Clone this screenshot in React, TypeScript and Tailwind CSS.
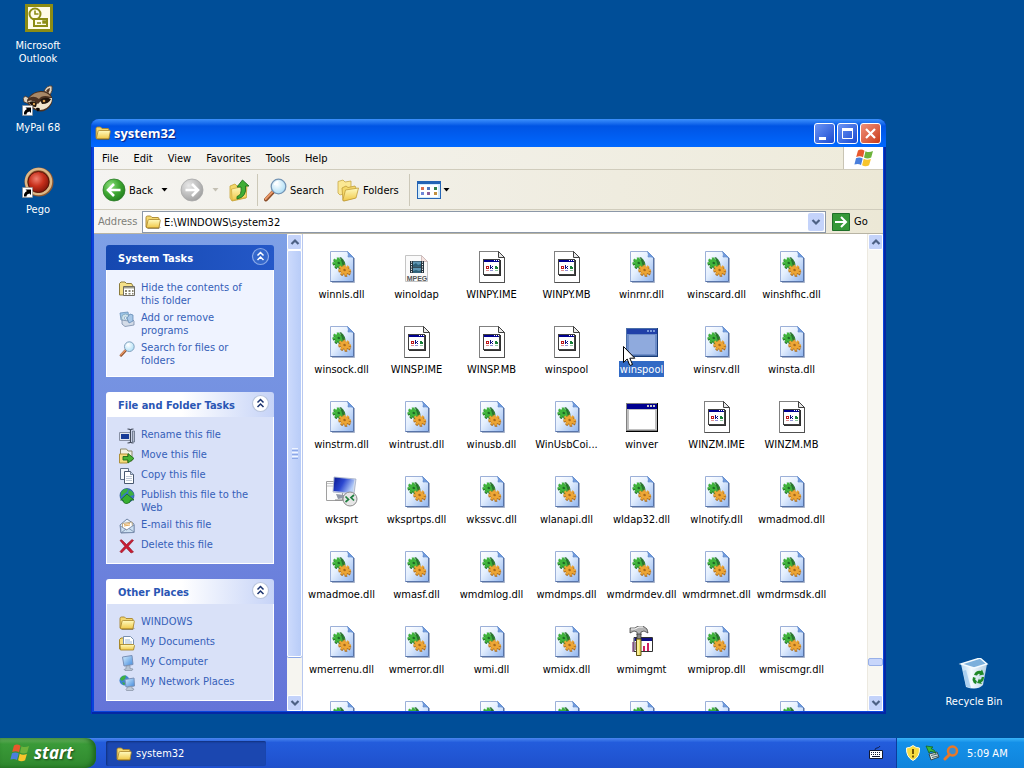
import React from "react";

type IconProps = { className?: string };
type FileKind = "dll" | "ime" | "mpeg" | "exe" | "remote" | "mgmt";
type FileEntry = { name: string; kind: FileKind; selected?: boolean };

const file = (name: string, kind: FileKind = "dll", selected = false): FileEntry => ({ name, kind, selected });

const files: FileEntry[] = [
  file("winnls.dll"), file("winoldap", "mpeg"), file("WINPY.IME", "ime"), file("WINPY.MB", "ime"), file("winrnr.dll"), file("winscard.dll"), file("winshfhc.dll"),
  file("winsock.dll"), file("WINSP.IME", "ime"), file("WINSP.MB", "ime"), file("winspool", "ime"), file("winspool", "exe", true), file("winsrv.dll"), file("winsta.dll"),
  file("winstrm.dll"), file("wintrust.dll"), file("winusb.dll"), file("WinUsbCoi..."), file("winver", "exe"), file("WINZM.IME", "ime"), file("WINZM.MB", "ime"),
  file("wksprt", "remote"), file("wksprtps.dll"), file("wkssvc.dll"), file("wlanapi.dll"), file("wldap32.dll"), file("wlnotify.dll"), file("wmadmod.dll"),
  file("wmadmoe.dll"), file("wmasf.dll"), file("wmdmlog.dll"), file("wmdmps.dll"), file("wmdrmdev.dll"), file("wmdrmnet.dll"), file("wmdrmsdk.dll"),
  file("wmerrenu.dll"), file("wmerror.dll"), file("wmi.dll"), file("wmidx.dll"), file("wmimgmt", "mgmt"), file("wmiprop.dll"), file("wmiscmgr.dll"),
];

/* Row that is only partly scrolled into view: icons without captions */
const partialRow = ["Library 1", "Library 2", "Library 3", "Library 4", "Library 5", "Library 6", "Library 7"];

/* Gradients shared by all the icons */
function SharedGradients() {
  return (
    <svg className="absolute h-0 w-0" aria-hidden="true">
      <defs>
        <linearGradient id="dllPage" x1="0" y1="0" x2="1" y2="1">
          <stop offset="0" stopColor="#ffffff" /><stop offset="0.45" stopColor="#e4effe" /><stop offset="1" stopColor="#8fb4ee" />
        </linearGradient>
        <linearGradient id="folderFace" x1="0" y1="0" x2="0" y2="1">
          <stop offset="0" stopColor="#fffbc0" /><stop offset="1" stopColor="#f0c848" />
        </linearGradient>
        <radialGradient id="greenBall" cx="0.35" cy="0.3" r="0.8">
          <stop offset="0" stopColor="#8fe07e" /><stop offset="0.5" stopColor="#3fa832" /><stop offset="1" stopColor="#1f7a1c" />
        </radialGradient>
        <radialGradient id="greyBall" cx="0.35" cy="0.3" r="0.8">
          <stop offset="0" stopColor="#e8e8e8" /><stop offset="0.6" stopColor="#b9b9b9" /><stop offset="1" stopColor="#9a9a9a" />
        </radialGradient>
        <radialGradient id="lens" cx="0.4" cy="0.35" r="0.7">
          <stop offset="0" stopColor="#ffffff" /><stop offset="1" stopColor="#a8dcf5" />
        </radialGradient>
        <radialGradient id="pegoRed" cx="0.4" cy="0.35" r="0.7">
          <stop offset="0" stopColor="#f08070" /><stop offset="0.5" stopColor="#c8301c" /><stop offset="1" stopColor="#7c1408" />
        </radialGradient>
        <linearGradient id="screenBlue" x1="0" y1="0" x2="1" y2="0.4">
          <stop offset="0" stopColor="#0a1890" /><stop offset="0.5" stopColor="#2c48d0" /><stop offset="1" stopColor="#b8d0f8" />
        </linearGradient>
        <linearGradient id="monitor" x1="0" y1="0" x2="1" y2="1">
          <stop offset="0" stopColor="#d8f0ff" /><stop offset="1" stopColor="#3f88dc" />
        </linearGradient>
        <linearGradient id="binBody" x1="0" y1="0" x2="1" y2="0">
          <stop offset="0" stopColor="#b8daf4" /><stop offset="0.4" stopColor="#f4fbff" /><stop offset="1" stopColor="#b4cfe4" />
        </linearGradient>
      </defs>
    </svg>
  );
}

function Gear({ cx, cy, color, edge }: { cx: number; cy: number; color: string; edge: string }) {
  return (
    <g transform={`translate(${cx} ${cy}) rotate(22) scale(1 0.84)`}>
      <g transform="translate(0.6 1.1)">
        <circle r="5.300" fill="none" stroke={edge} strokeWidth="2.400" strokeDasharray="2.400 1.760" />
        <circle r="4.500" fill={edge} />
      </g>
      <circle r="5.300" fill="none" stroke={color} strokeWidth="2.200" strokeDasharray="2.400 1.760" />
      <circle r="4.500" fill={color} />
      <circle r="1.400" fill={edge} />
    </g>
  );
}

function DllIcon() {
  return (
    <svg viewBox="0 0 32 32" className="h-8 w-8" aria-hidden="true">
      <path d="M6 31.5h22.5V7" fill="none" stroke="#8494b4" strokeWidth="1" opacity="0.7" />
      <path d="M4.5.5h17l6 6v24h-23z" fill="url(#dllPage)" stroke="#9cb0d8" />
      <path d="M27.5 6.5v24h-23" fill="none" stroke="#5874a8" />
      <path d="M21.5.5q1.500 3 .5 5.500 3-.5 5.500.5z" fill="#6f9ade" stroke="#5c88cc" strokeWidth="0.7" />
      <Gear cx={12.8} cy={12} color="#3fb43c" edge="#1f6a26" />
      <Gear cx={18.6} cy={19} color="#eda636" edge="#a8681c" />
      <path d="M13.500 6.500l1.500-.5 4 5-1 3.500-1.500 0-1-4z" fill="#24682c" opacity="0.800" />
    </svg>
  );
}

function ImeIcon() {
  return (
    <svg viewBox="0 0 32 32" className="h-8 w-8" aria-hidden="true" shapeRendering="crispEdges">
      <path d="M3.500.5h19l6 6v25h-25z" fill="#fff" stroke="#808080" />
      <path d="M28.500 7v24.500h-25" fill="none" stroke="#505050" />
      <path d="M22.500.5v6h6z" fill="#e8e8e8" stroke="#404040" shapeRendering="auto" />
      <path d="M7.500 8.500h16v15h-16z" fill="#fff" stroke="#404040" />
      <path d="M24.500 9v15.500H8" fill="none" stroke="#303030" />
      <path d="M8 9h15v2H8z" fill="#000090" />
      <path d="M18 9h1v1h-1zm2 0h1v1h-1zm2 0h1v1h-1z" fill="#fff" />
      <path d="M10 15h3v3h-3z" fill="#c01818" />
      <path d="M11 16h1v1h-1z" fill="#fff" />
      <path d="M14 14h1v4h-1zm2 1h1v1h-1zm-1 1h1v1h-1zm1 1h1v1h-1z" fill="#101080" />
      <path d="M19 15h2v1h1v2h-3z" fill="#188038" />
      <path d="M10 19h3v1h-3z" fill="#e09090" /><path d="M14 19h3v1h-3z" fill="#9090d8" /><path d="M19 19h3v1h-3z" fill="#90c8a0" />
    </svg>
  );
}

function MpegIcon() {
  return (
    <svg viewBox="0 0 32 32" className="h-8 w-8" aria-hidden="true">
      <path d="M4.500 4.500h16l6 6v20h-22z" fill="#fafafa" stroke="#c4c4c4" />
      <path d="M20.500 4.500v6h6z" fill="#f6e4e0" stroke="#c8b4b4" strokeWidth="0.800" />
      <path d="M9 10h14v12H9z" fill="#26343e" />
      <path d="M12 10.500h8v5h-8zm0 6.300h8v5h-8z" fill="#5f96b4" />
      <path d="M12 14l3-2 2 2 3-1v2.500h-8zm0 6l3-1 3 1 2-1v2.800h-8z" fill="#2c6078" />
      <path d="M10.500 10.500v12M21.500 10.500v12" stroke="#fff" strokeWidth="1" strokeDasharray="1.200 1.200" />
      <text x="16" y="30" textAnchor="middle" fontFamily="Liberation Sans, sans-serif" fontWeight="700" fontSize="7" fill="#555">MPEG</text>
    </svg>
  );
}

function ExeIcon({ selected }: { selected?: boolean }) {
  return (
    <svg viewBox="0 0 32 32" className="h-8 w-8" aria-hidden="true" shapeRendering="crispEdges">
      <path d="M0 2h32v29H0z" fill={selected ? "#4a6ea8" : "#808080"} />
      <path d="M31 2h1v29H0v-1h31z" fill={selected ? "#183c78" : "#000"} />
      <path d="M1 3h30v26H1z" fill={selected ? "#6c8cc8" : "#c0c0c0"} />
      <path d="M1 3h30v5H1z" fill={selected ? "#2040a8" : "#000090"} />
      <path d="M3 9h26v19H3z" fill={selected ? "#8faadd" : "#fff"} />
      <path d="M21 4h2v2h-2zm3 0h2v2h-2zm3 0h2v2h-2z" fill={selected ? "#7898d8" : "#c8c8c8"} />
    </svg>
  );
}

function RemoteIcon() {
  return (
    <svg viewBox="0 0 32 32" className="h-8 w-8" aria-hidden="true">
      <path d="M.5 5.500h16v19H.5z" fill="#fdfdfd" stroke="#a0a0a0" />
      <path d="M1 7.500h14M1 10h14" stroke="#c4c4c4" />
      <path d="M8 1l22 2-2 15-21-2z" fill="#d4dcec" stroke="#98a4bc" strokeWidth="0.700" />
      <path d="M8.500 1.500l20 2-2 13.500-19-2z" fill="url(#screenBlue)" />
      <path d="M10 18l8 1v3l-6 1z" fill="#9098a8" />
      <path d="M9 24h10" stroke="#888" />
      <circle cx="24" cy="23" r="7" fill="#e6e6e6" stroke="#8c8c8c" />
      <path d="M19.500 20.500l3 3-3 2.500M28 19l-3 2.500 3 3" fill="none" stroke="#208040" strokeWidth="1.700" />
    </svg>
  );
}

function MgmtIcon() {
  return (
    <svg viewBox="0 0 32 32" className="h-8 w-8" aria-hidden="true">
      <path d="M8 11.500h18.500v14H8z" fill="#fff" stroke="#303030" />
      <path d="M8.500 12h17.500v3H8.500z" fill="#101080" />
      <path d="M7 16v10M10 16v8" stroke="#601060" />
      <path d="M17 20h2v5h-2zM21 17h2v8h-2z" fill="#d02060" />
      <path d="M13.500 19v6" stroke="#2040b0" strokeWidth="1.500" />
      <path d="M4 2h5l3-2h5l4 3 1 4-4-2-3 1v3h-4V6L8 5 4 7z" fill="#b4b4b4" stroke="#303030" strokeWidth="0.700" />
      <path d="M5 3h4l4-2h4" fill="none" stroke="#fff" />
      <path d="M11 8h4v5h-4z" fill="#888" stroke="#303030" strokeWidth="0.700" />
      <path d="M10.500 13h4.500v16.500h-4.500z" fill="#f0e060" stroke="#605010" />
      <path d="M12 14v15" stroke="#fffbd0" />
    </svg>
  );
}

function FileIcon({ kind, selected }: { kind: FileKind; selected?: boolean }) {
  switch (kind) {
    case "ime": return <ImeIcon />;
    case "mpeg": return <MpegIcon />;
    case "exe": return <ExeIcon selected={selected} />;
    case "remote": return <RemoteIcon />;
    case "mgmt": return <MgmtIcon />;
    default: return <DllIcon />;
  }
}

function FolderIcon({ className = "h-4 w-4" }: IconProps) {
  return (
    <svg viewBox="0 0 16 16" className={className} aria-hidden="true">
      <path d="M1 13V3.500Q1 2 2.500 2h3L7 3.500h6Q14 3.500 14 5v8.500H2z" fill="#f4d870" stroke="#a8842c" strokeWidth="0.900" />
      <path d="M1.300 13.500L3 6.500Q3.200 5.500 4.200 5.500h10.300q1 0 .8 1L14 13q-.2.800-1 .8H2z" fill="url(#folderFace)" stroke="#a8842c" strokeWidth="0.800" />
      <path d="M2.500 14.500h11.500l1.300-1.500" fill="none" stroke="#6c5820" strokeWidth="0.600" />
    </svg>
  );
}

function FlagIcon({ className }: IconProps) {
  return (
    <svg viewBox="0 0 20 20" className={className} aria-hidden="true">
      <path d="M4 2.500q3-2 6.500.2L9 9.200Q5.800 7.300 2.200 9z" fill="#e8582c" />
      <path d="M11.500 3.200q3.500 1.800 7.500-.2l-1.800 6.500q-3.800 1.800-7.200 0z" fill="#6db33c" />
      <path d="M2 10.200q3.300-1.700 6.700.2L7 17Q4 15 .4 16.600z" fill="#4a7fdc" />
      <path d="M9.700 10.800q3.400 1.700 7.200.1l-1.800 6.300q-3.700 1.900-7 .1z" fill="#f8c52c" />
    </svg>
  );
}

function Magnifier({ className }: IconProps) {
  return (
    <svg viewBox="0 0 24 24" className={className} aria-hidden="true">
      <path d="M10 14L3 21.500" stroke="#8a4c28" strokeWidth="4" strokeLinecap="round" />
      <path d="M9.500 13.800L2.600 21" stroke="#e89868" strokeWidth="2" strokeLinecap="round" />
      <circle cx="15.500" cy="8.500" r="7.300" fill="url(#lens)" stroke="#7494b4" strokeWidth="1.300" />
      <path d="M11.500 7a4.500 4.500 0 0 1 4-3.200" fill="none" stroke="#fff" strokeWidth="1.500" />
    </svg>
  );
}

function ArrowBall({ left }: { left?: boolean }) {
  return (
    <svg viewBox="0 0 24 24" className="h-6 w-6" aria-hidden="true">
      <circle cx="12" cy="12" r="11" fill={left ? "url(#greenBall)" : "url(#greyBall)"} stroke={left ? "#2c7c28" : "#a8a8a8"} strokeWidth="0.800" />
      <path d={left ? "M18.500 12H7M12 6l-6 6 6 6" : "M5.500 12H17M12 6l6 6-6 6"} fill="none" stroke="#fff" strokeWidth="2.600" />
    </svg>
  );
}

function UpFolderIcon() {
  return (
    <svg viewBox="0 0 24 24" className="h-6 w-6" aria-hidden="true">
      <path d="M2 8l5-2 2 2 8-2 2 2-1 12L4 23 2 20z" fill="#f4d868" stroke="#c8a438" strokeWidth="0.800" />
      <path d="M3.500 11l14-3 1 11.500L4 22.500z" fill="url(#folderFace)" stroke="#c8a438" strokeWidth="0.700" />
      <path d="M9 18.500q5-1 4-9.500H9L14.500 2l6.500 6h-3.500q1.500 11-8.500 13z" fill="#3fae34" stroke="#1f7020" strokeWidth="0.900" />
    </svg>
  );
}

function FoldersIcon() {
  return (
    <svg viewBox="0 0 24 24" className="h-6 w-6" aria-hidden="true">
      <path d="M2 3.500l5-1.500 2 2 6-1v10L4 17 2 15z" fill="#fbe894" stroke="#c8a848" strokeWidth="0.800" />
      <path d="M6 10l4-2 2 1.500 7-1.500 1 2-1 10-12 3z" fill="#f4d868" stroke="#c09c38" strokeWidth="0.800" />
      <path d="M7 21.500L9.500 12l13-2-2.500 10-12 3z" fill="url(#folderFace)" stroke="#c09c38" strokeWidth="0.800" />
    </svg>
  );
}

function ViewsIcon() {
  return (
    <svg viewBox="0 0 24 20" className="h-5 w-6" aria-hidden="true" shapeRendering="crispEdges">
      <path d="M0 1h24v18H0z" fill="#2464b4" /><path d="M1 4h22v14H1z" fill="#d4ecfc" /><path d="M3 5h18v12H3z" fill="#fff" />
      <path d="M4 7h3v3H4z" fill="#d87050" /><path d="M10 7h3v3h-3z" fill="#5078c0" /><path d="M17 7h3v3h-3z" fill="#308048" />
      <path d="M4 12h3v3H4z" fill="#7088d8" /><path d="M10 12h3v3h-3z" fill="#906098" /><path d="M17 12h3v3h-3z" fill="#c09040" />
    </svg>
  );
}

function Chevron({ up }: { up?: boolean }) {
  return (
    <svg viewBox="0 0 10 8" className="h-2 w-2.5" aria-hidden="true">
      <path d={up ? "M1.500 6L5 2.500 8.500 6" : "M1.500 2L5 5.500 8.500 2"} fill="none" stroke="#4d6185" strokeWidth="2.200" />
    </svg>
  );
}

function Caret({ muted }: { muted?: boolean }) {
  return (
    <svg viewBox="0 0 7 4" className="h-1 w-[7px]" aria-hidden="true">
      <path d="M0.500 0h6l-3 3.500z" fill={muted ? "#c4c0b4" : "#000"} />
    </svg>
  );
}

/* 16px icons for the task pane */
const paneIcons: Record<string, React.ReactNode> = {
  hide: (
    <>
      <path d="M.5 14V2.500L2 1h4l1.500 1.500h5L14 5v9z" fill="#f4e088" stroke="#8c7c3c" />
      <path d="M4.500 5.500h11v9h-11z" fill="#fff" stroke="#706c60" />
      <path d="M5 6h10v1.500H5z" fill="#a0a090" />
      <path d="M6 9h2v2H6zm3.500 0h2v2h-2zM13 9h1.500v2H13zM6 12h2v1.500H6zm3.500 0h2v1.500h-2zm3.500 0h1.500v1.500H13z" fill="#888470" />
    </>
  ),
  programs: (
    <>
      <path d="M1 2l8-1 1 6-8 2z" fill="#9cc4e8" stroke="#6890b8" strokeWidth="0.800" />
      <circle cx="6.500" cy="7" r="4" fill="#cfe4ec" stroke="#7ca0b8" strokeWidth="0.800" /><circle cx="6.500" cy="7" r="1.200" fill="#fff" stroke="#6890b8" strokeWidth="0.600" />
      <path d="M3 9l6 1 1-5 5 5v4l-9 1.500L3 13z" fill="#d4dce8" stroke="#788ca8" strokeWidth="0.800" />
      <path d="M8 7l3-4 3 1v6l-4 2z" fill="#a8c8e8" stroke="#5880ac" strokeWidth="0.700" />
    </>
  ),
  rename: (
    <>
      <path d="M.5 4.500h11v8H.5z" fill="#e4e8f0" stroke="#8890a4" /><path d="M2 6h8v5H2z" fill="#183c98" />
      <path d="M8.500 1q2.500 0 3 1 .5-1 3-1M8.500 15q2.500 0 3-1 .5 1 3 1M11.500 2v12" fill="none" stroke="#404858" strokeWidth="1.200" />
      <path d="M13.500 3h2v11h-2z" fill="#b4bccc" stroke="#606c84" strokeWidth="0.800" />
    </>
  ),
  move: (
    <>
      <path d="M1.500 1h6l1.500 2h4v10h-11.500z" fill="#f0f0e4" stroke="#8c8868" />
      <path d="M.5 6h8v9h-8z" fill="#f4dc7c" stroke="#b09038" />
      <path d="M4 8.500h5V5.500l6 5-6 4.500V12H4z" fill="#48b434" stroke="#1c6c18" strokeWidth="0.900" />
    </>
  ),
  copy: (
    <>
      <path d="M1.500.5h8v11h-8z" fill="#f4f8fc" stroke="#607088" />
      <path d="M5.500 3.500h6l3 3v9h-9z" fill="#fff" stroke="#485870" /><path d="M11.500 3.500v3h3" fill="#c4d4e8" stroke="#485870" strokeWidth="0.700" />
      <path d="M7 8.500h6M7 10.500h6M7 12.500h6" stroke="#a0b0c4" strokeWidth="0.700" />
    </>
  ),
  publish: (
    <>
      <circle cx="8" cy="7.500" r="7" fill="#3878c8" stroke="#1c4c88" strokeWidth="0.700" />
      <path d="M2 4q3-4 7-3l-1 3-3 2-3 3zM10 2q4 1 5 5l-4 1-2-3z" fill="#3cb040" />
      <path d="M8 6l7 6h-3.500q0 3-3.500 3.500T4 12H1.500z" fill="#38b030" stroke="#186c1c" strokeWidth="0.800" />
    </>
  ),
  email: (
    <>
      <path d="M1 7l7-6 7 5v8.500L2 15z" fill="#e8f0fa" stroke="#7488a8" />
      <path d="M3.500 5.500L13 4l.5 5-5 3-5-2z" fill="#fff" stroke="#a08858" strokeWidth="0.700" />
      <path d="M1.500 8l6 4 7.500-5v7.500H2zM2 15l5-4M15 14l-5-3.500" fill="#cde0f2" stroke="#7488a8" strokeWidth="0.800" />
      <path d="M5 6.500l6-1M5 8l6-1" stroke="#e0a048" strokeWidth="0.900" />
    </>
  ),
  delete: <path d="M1 2.500Q2 1 3.500 2.500L7.500 6.500 13 1.500l1.500 1L9.300 8.200 14.500 14l-2.500 1-4.700-5L2.500 15 1 13.500 5.800 8.300z" fill="#c81c34" stroke="#901424" strokeWidth="0.600" />,
  documents: (
    <>
      <path d="M.5 14V4.500L2 3h3V14z" fill="#f4dc7c" stroke="#a8882c" />
      <path d="M4.500 1.500h7l3 3v9h-10z" fill="#fff" stroke="#7890b0" /><path d="M6 5h5M6 7h7M6 9h7" stroke="#88a8d0" strokeWidth="0.800" />
      <path d="M1 9.500h13.500l1 1-1 4.500H1.500z" fill="url(#folderFace)" stroke="#a8882c" strokeWidth="0.900" />
    </>
  ),
  computer: (
    <>
      <path d="M3.500 2L13 .5l1 9L5 11z" fill="url(#monitor)" stroke="#7890b8" />
      <path d="M7 11l4-.5v3l3 .5-1 1.500H6l-1-1 2-.7z" fill="#b8c4d4" stroke="#8490a4" strokeWidth="0.700" />
    </>
  ),
  network: (
    <>
      <circle cx="5.500" cy="5.500" r="5" fill="#3c84d0" /><path d="M1 4q2-4 6-3.500L6 4 3 6zM3 7l3 1-1 2.500z" fill="#3cb040" />
      <path d="M6 4.500L15 3l.5 8L7 12z" fill="url(#monitor)" stroke="#7890b8" />
      <path d="M9 12l4-.5v2l2 .5-1 1.500H7.500l-.5-1z" fill="#c0cad8" stroke="#8490a4" strokeWidth="0.700" />
    </>
  ),
};

function PaneIcon({ id }: { id: string }) {
  if (id === "folder") return <FolderIcon className="h-4 w-4 shrink-0" />;
  if (id === "search") return <Magnifier className="h-4 w-4 shrink-0" />;
  return <svg viewBox="0 0 16 16" className="h-4 w-4 shrink-0" aria-hidden="true">{paneIcons[id]}</svg>;
}

type PanelProps = { title: string; primary?: boolean; items: [string, string][] };

function Panel({ title, primary, items }: PanelProps) {
  return (
    <section>
      <h2
        className={
          primary
            ? "flex h-[25px] items-center justify-between rounded-t-[3px] bg-linear-to-r from-[#1548b0] to-[#2458c8] pr-1 pl-3 text-[11px] font-bold text-white"
            : "flex h-[25px] items-center justify-between rounded-t-[3px] bg-linear-to-r from-white from-45% to-[#c6d3f7] pr-1 pl-3 text-[11px] font-bold text-[#2a56b4]"
        }
      >
        <span className="pt-0.5 whitespace-nowrap">{title}</span>
        <button type="button" aria-label={`Collapse ${title}`} className="mb-0.5 h-[19px] w-[19px]">
          <svg viewBox="0 0 19 19" className="h-[19px] w-[19px]" aria-hidden="true">
            <circle cx="9.500" cy="9.500" r="8" fill={primary ? "#3468cc" : "#fff"} stroke={primary ? "#88a8e8" : "#b8c4dc"} strokeWidth="1.200" />
            <path d="M6.500 8.500l3-3 3 3M6.500 13l3-3 3 3" fill="none" stroke={primary ? "#fff" : "#1c3470"} strokeWidth="1.500" />
          </svg>
        </button>
      </h2>
      <ul className={primary ? "flex flex-col gap-1 border border-t-0 border-white bg-[#eff3ff] pt-[11px] pr-2 pb-[9px] pl-3" : "flex flex-col gap-1 border border-t-0 border-white bg-[#d9e1f8] pt-[11px] pr-2 pb-[9px] pl-3"}>
        {items.map(([icon, label]) => (
          <li key={label}>
            <a href="#" className="flex min-h-4 gap-1.5 text-[11px] leading-[13px] text-[#3560b8]">
              <PaneIcon id={icon} />
              <span className="max-w-[112px]">{label}</span>
            </a>
          </li>
        ))}
      </ul>
    </section>
  );
}

function ScrollButton({ up }: { up?: boolean }) {
  return (
    <button type="button" aria-label={up ? "Scroll up" : "Scroll down"} className="flex h-4 w-full shrink-0 items-center justify-center rounded-[2px] border border-white bg-[#c4d3fa]">
      <Chevron up={up} />
    </button>
  );
}

function ExplorerWindow() {
  return (
    <section aria-label="system32" className="absolute top-[119px] right-[138px] bottom-6 left-[91px] flex flex-col overflow-hidden rounded-t-lg bg-[#0844dc] px-[3px] pb-[3px] shadow-[inset_1px_0_0_#0a2fc8,inset_-2px_-2px_0_#0428a4]">
      <header className="-mx-[3px] flex h-7 shrink-0 items-center bg-linear-to-b from-[#3c90fc] via-[#0054e4] via-25% to-[#0068ff] pr-[5px] pl-1">
        <FolderIcon className="h-4 w-4" />
        <h1 className="ml-[3px] flex-1 font-['Open_Sans','Noto_Sans',sans-serif] text-[13px] font-bold text-white [text-shadow:1px_1px_1px_#0a1e80]">system32</h1>
        <div className="flex gap-0.5">
          <button type="button" aria-label="Minimize" className="h-[21px] w-[21px] rounded-[3px] border border-white bg-linear-to-br from-[#6c94f4] to-[#1c48d0]">
            <svg viewBox="0 0 19 19" aria-hidden="true"><path d="M4 13h7v3H4z" fill="#fff" /></svg>
          </button>
          <button type="button" aria-label="Maximize" className="h-[21px] w-[21px] rounded-[3px] border border-white bg-linear-to-br from-[#6c94f4] to-[#1c48d0]">
            <svg viewBox="0 0 19 19" aria-hidden="true"><path d="M4.500 5v9.500h10V5" fill="none" stroke="#fff" /><path d="M4 4h11v3H4z" fill="#fff" /></svg>
          </button>
          <button type="button" aria-label="Close" className="h-[21px] w-[21px] rounded-[3px] border border-white bg-linear-to-br from-[#f09078] to-[#c83814]">
            <svg viewBox="0 0 19 19" aria-hidden="true"><path d="M5 5l9 9M14 5l-9 9" stroke="#fff" strokeWidth="2.200" /></svg>
          </button>
        </div>
      </header>

      <div className="flex h-[23px] shrink-0 border-b border-[#d0ccbc] bg-linear-to-r from-[#f5f4f1] to-[#eeebdb]">
        <nav aria-label="Menu bar" className="flex flex-1 items-center gap-px pl-px">
          {["File", "Edit", "View", "Favorites", "Tools", "Help"].map((m) => (
            <button key={m} type="button" className="px-[7px]">{m}</button>
          ))}
        </nav>
        <div className="flex w-10 items-center justify-center border-l border-[#c8c4b4] bg-white">
          <FlagIcon className="h-5 w-5" />
        </div>
      </div>

      <div className="flex h-10 shrink-0 items-center border-b border-[#d0ccbc] bg-linear-to-r from-[#f5f4f1] to-[#ece8d6] pt-px pl-2">
        <button type="button" className="flex w-[55px] items-center gap-[3px]"><ArrowBall left />Back</button>
        <button type="button" aria-label="Back history" className="flex h-6 w-[15px] items-center justify-center"><Caret /></button>
        <button type="button" aria-label="Forward" className="ml-2"><ArrowBall /></button>
        <button type="button" aria-label="Forward history" className="flex h-6 w-[22px] items-center justify-center"><Caret muted /></button>
        <button type="button" aria-label="Up" className="ml-0.5"><UpFolderIcon /></button>
        <span className="mx-[5px] h-8 w-px bg-[#ccc8b8]" />
        <button type="button" className="flex w-[73px] items-center gap-[3px]"><Magnifier className="h-6 w-6" />Search</button>
        <button type="button" className="flex w-[73px] items-center gap-[3px]"><FoldersIcon />Folders</button>
        <span className="mr-[7px] h-8 w-px bg-[#ccc8b8]" />
        <button type="button" aria-label="Views" className="flex items-center gap-0.5"><ViewsIcon /><Caret /></button>
      </div>

      <form className="flex h-6 shrink-0 items-center border-b border-[#b8b4a4] bg-linear-to-r from-[#f5f4f1] to-[#ece8d6]" onSubmit={(e) => e.preventDefault()}>
        <label htmlFor="address" className="w-12 pl-1 text-[#808078]">Address</label>
        <div className="flex h-[22px] flex-1 items-center border border-[#8c98a8] bg-white pr-px pl-0.5">
          <FolderIcon className="h-4 w-4" />
          <input id="address" type="text" defaultValue="E:\WINDOWS\system32" className="min-w-0 flex-1 pt-0.5 pl-[3px] outline-none" />
          <button type="button" aria-label="Address list" className="flex h-[18px] w-4 items-center justify-center rounded-[2px] bg-[#c4d3fa]"><Chevron /></button>
        </div>
        <button type="submit" className="flex w-[57px] items-center gap-1 pl-1.5">
          <svg viewBox="0 0 18 18" className="h-[18px] w-[18px]" aria-hidden="true">
            <path d="M.5.5h17v17H.5z" fill="#359838" stroke="#1f6f28" />
            <path d="M3 9h11M9 4l5 5-5 5" fill="none" stroke="#fff" strokeWidth="2" />
          </svg>
          Go
        </button>
      </form>

      <div className="flex min-h-0 flex-1 bg-white">
        <aside className="flex w-[193px] shrink-0 flex-col gap-[15px] overflow-hidden bg-linear-to-b from-[#7ea0e6] to-[#6474d8] pt-[11px] pr-[13px] pl-3">
          <Panel primary title="System Tasks" items={[["hide", "Hide the contents of this folder"], ["programs", "Add or remove programs"], ["search", "Search for files or folders"]]} />
          <Panel
            title="File and Folder Tasks"
            items={[["rename", "Rename this file"], ["move", "Move this file"], ["copy", "Copy this file"], ["publish", "Publish this file to the Web"], ["email", "E-mail this file"], ["delete", "Delete this file"]]}
          />
          <Panel title="Other Places" items={[["folder", "WINDOWS"], ["documents", "My Documents"], ["computer", "My Computer"], ["network", "My Network Places"]]} />
        </aside>
        <div className="flex w-4 shrink-0 flex-col border-r border-[#b8c8f0] bg-[#f6f5f0]">
          <ScrollButton up />
          <div className="flex flex-[407] flex-col items-center justify-center gap-px rounded-[2px] border border-white bg-linear-to-r from-[#ccdafc] to-[#b8ccf8] shadow-[0_1px_0_#8ca8e8]">
            <span className="h-px w-1.5 bg-[#eef4ff]" /><span className="h-px w-1.5 bg-[#8ca8e8]" />
            <span className="h-px w-1.5 bg-[#eef4ff]" /><span className="h-px w-1.5 bg-[#8ca8e8]" />
            <span className="h-px w-1.5 bg-[#eef4ff]" /><span className="h-px w-1.5 bg-[#8ca8e8]" />
          </div>
          <div className="flex-[38]" />
          <ScrollButton />
        </div>
        <ul className="grid min-w-0 flex-1 auto-rows-[75px] grid-cols-[repeat(auto-fill,75px)] content-start overflow-hidden pt-[17px] pl-px">
          {files.map((f, i) => (
            <li key={i} className="relative">
              <button type="button" className="flex w-full flex-col items-center gap-[3px]">
                <FileIcon kind={f.kind} selected={f.selected} />
                <span className={f.selected ? "bg-[#316ac5] px-px pt-0.5 leading-[14px] text-white" : "px-px pt-0.5 leading-[14px]"}>{f.name}</span>
              </button>
              {f.selected && (
                <svg viewBox="0 0 13 21" className="absolute top-5 left-[19px] h-[21px] w-[13px]" aria-hidden="true">
                  <path d="M.5.5v16l3.700-3.500 2.600 6.500 2.700-1-2.700-6.300h5z" fill="#fff" stroke="#000" />
                </svg>
              )}
            </li>
          ))}
          {partialRow.map((name) => (
            <li key={name}>
              <button type="button" aria-label={name} className="flex w-full justify-center"><DllIcon /></button>
            </li>
          ))}
        </ul>
        <div className="flex w-4 shrink-0 flex-col border-l border-[#ece9e0] bg-[#f8f7f2]">
          <ScrollButton up />
          <div className="flex-[408]" />
          <div className="h-2 shrink-0 rounded-[2px] border border-[#98b0e8] bg-[#c8d6fb]" />
          <div className="flex-[29]" />
          <ScrollButton />
        </div>
      </div>
    </section>
  );
}

function ShortcutBadge() {
  return (
    <>
      <path d="M.5 21.500h10v10H.5z" fill="#fff" stroke="#888" strokeWidth="0.600" />
      <path d="M2 30.500q-.5-4 3-5.500L3.500 23.500H9V29l-1.500-1.500Q4.500 28 4.500 30.500z" fill="#000" />
    </>
  );
}

function DesktopIcon({ label, children }: { label: string; children: React.ReactNode }) {
  return (
    <button type="button" className="flex w-[76px] flex-col items-center gap-[5px] px-2 text-[11px] leading-[13px] text-white">
      <svg viewBox="0 0 32 32" className="h-8 w-8" aria-hidden="true">{children}</svg>
      <span className="text-center">{label}</span>
    </button>
  );
}

function Desktop() {
  return (
    <>
      <ul className="absolute top-0.5 left-0 grid auto-rows-[82px]">
        <li>
          <DesktopIcon label="Microsoft Outlook">
            <path d="M3 2h28v28H3z" fill="#8c8c14" /><path d="M6 5h22v22H6z" fill="#fffce8" />
            <circle cx="13" cy="12" r="5.500" fill="#fffce8" stroke="#8c8c14" strokeWidth="2" /><path d="M13 8.500V12h3.500" fill="none" stroke="#8c8c14" strokeWidth="1.600" />
            <path d="M12 17h13v7H12z" fill="#fffce8" stroke="#8c8c14" strokeWidth="2" /><path d="M15 21h4M21 19h3v2h-3z" stroke="#8c8c14" strokeWidth="1.500" fill="#8c8c14" />
          </DesktopIcon>
        </li>
        <li>
          <DesktopIcon label="MyPal 68">
            <path d="M22 7q3-6 8-5 1 5-2 9zM3 12q-3 2-1 6l5 2 2-5z" fill="#e0d4c0" stroke="#402c20" strokeWidth="0.800" />
            <path d="M24 7q2-3 4-3 0 3-2 5z" fill="#503424" />
            <path d="M5 16q4-8 13-9 9-1 12 6 2 8-6 13-5 3-11 0-8-4-8-10z" fill="#4c3222" />
            <path d="M7 14q5-6 12-6 6 0 10 5-9-3-12 2-5-4-10-1z" fill="#a88868" />
            <path d="M6 17q5-2 10 3 5-7 14-6 0 3-1 5-4 7-11 7-8-1-12-9z" fill="#f0e4cc" />
            <path d="M7 18q5-2 8 1l-1 4q-5 0-7-5zM18 16q5-4 11-1-2 5-9 5z" fill="#20140c" />
            <circle cx="12" cy="20" r="1.200" fill="#d8a050" /><circle cx="22" cy="17" r="1.300" fill="#d8a050" />
            <path d="M14 24q3-1 4 1-1 3-3 2z" fill="#100804" />
            <ShortcutBadge />
          </DesktopIcon>
        </li>
        <li>
          <DesktopIcon label="Pego">
            <circle cx="17" cy="16" r="14.500" fill="#905830" /><circle cx="16.500" cy="15.500" r="12.500" fill="none" stroke="#dcb888" strokeWidth="2.500" />
            <circle cx="16.500" cy="16" r="10.500" fill="url(#pegoRed)" stroke="#581408" />
            <ShortcutBadge />
          </DesktopIcon>
        </li>
      </ul>
      <div className="absolute right-3 bottom-[30px]">
        <DesktopIcon label="Recycle Bin">
          <path d="M3 6L22 0l7 6-4 21q-6 6-17 2z" fill="url(#binBody)" />
          <path d="M3 6L22 0l7 6-13 4z" fill="#7cb0dc" stroke="#f4fbff" strokeWidth="1.400" />
          <path d="M5 13l3 15q2 2 5 2L8 12z" fill="#98c4ec" opacity="0.700" />
          <path d="M16 17q2-5 7-4l1-1.500 2 5-5 1 1-1.500q-2-1-3 1.500zM26 19q0 4-3 5.500l1 1.500-5-1 2-4.500.8 1.500q2-1 2-3zM15 19l3 1-1 1q1 2 2 2l-1 3q-3-1-3.500-4z" fill="#208828" />
        </DesktopIcon>
      </div>
    </>
  );
}

function Taskbar() {
  return (
    <footer className="flex h-[30px] shrink-0 bg-linear-to-b from-[#4a86f0] via-[#235cdc] via-15% to-[#1f50cc]">
      <button
        type="button"
        className="flex w-24 items-center gap-1 rounded-r-[10px] bg-linear-to-b from-[#70b868] via-[#3a9a38] via-20% to-[#2f882e] pl-2.5 font-['Open_Sans','Noto_Sans',sans-serif] text-[17px] font-bold text-white italic shadow-[inset_-3px_0_5px_#1c641c] [text-shadow:1px_1px_2px_#184818]"
      >
        <FlagIcon className="h-5 w-5" />
        <span className="leading-5">start</span>
      </button>
      <div className="flex flex-1 items-center pl-2.5">
        <button type="button" className="flex h-[25px] w-40 items-center gap-1 rounded-[2px] bg-[#1b47b0] pt-px pl-2.5 text-white shadow-[inset_1px_1px_2px_#10307c]">
          <FolderIcon className="h-4 w-4" />
          system32
        </button>
      </div>
      <div className="flex w-[34px] items-center pl-[7px]">
        <svg viewBox="0 0 14 14" className="h-3.5 w-3.5" aria-hidden="true">
          <path d="M6 4q0-2 2-2t3-2" fill="none" stroke="#102050" />
          <path d="M.5 4.500h13v8H.5z" fill="#fff" stroke="#101830" />
          <path d="M2 6.500h10M2 8.500h10" stroke="#101830" strokeDasharray="1 1" /><path d="M3 10.500h8" stroke="#101830" />
        </svg>
      </div>
      <div className="flex w-32 items-center border-l border-[#0c3c9c] bg-linear-to-b from-[#38b4f8] via-[#1490e8] via-15% to-[#1084dc] pl-2 text-white">
        <svg viewBox="0 0 16 16" className="h-4 w-4" aria-hidden="true">
          <path d="M8 .5Q11 3 14.500 3 15 12 8 15.500 1 12 1.500 3 5 3 8 .5z" fill="#f8dc40" stroke="#fffbe0" />
          <path d="M8 4v5M8 10.500v2" stroke="#604800" strokeWidth="1.800" />
        </svg>
        <svg viewBox="0 0 16 16" className="ml-[3px] h-4 w-4" aria-hidden="true">
          <path d="M5 9l8-2 2 5-8 3z" fill="#dce4dc" stroke="#304850" /><path d="M7 10.500l6-1.500M8 12.500l6-1.500" stroke="#506870" />
          <path d="M2 1l7 1-2 1.500q4 1 5 5-4-3-6-2L5 8z" fill="#38b83c" stroke="#145c1c" strokeWidth="0.700" />
        </svg>
        <svg viewBox="0 0 16 16" className="ml-[3px] h-4 w-4" aria-hidden="true">
          <circle cx="9.500" cy="6" r="4.500" fill="#3c8ccc" stroke="#e87828" strokeWidth="2.500" /><path d="M6.500 9.500L2 14" stroke="#e87828" strokeWidth="3" strokeLinecap="round" />
        </svg>
        <time className="ml-2 whitespace-nowrap">5:09 AM</time>
      </div>
    </footer>
  );
}

export default function App() {
  return (
    <div className="flex h-screen flex-col overflow-hidden bg-[#004e98] font-['DejaVu_Sans_Condensed','Noto_Sans',sans-serif] text-[11px] leading-[13px] text-black">
      <SharedGradients />
      <main className="relative min-h-0 flex-1">
        <Desktop />
        <ExplorerWindow />
      </main>
      <Taskbar />
    </div>
  );
}
